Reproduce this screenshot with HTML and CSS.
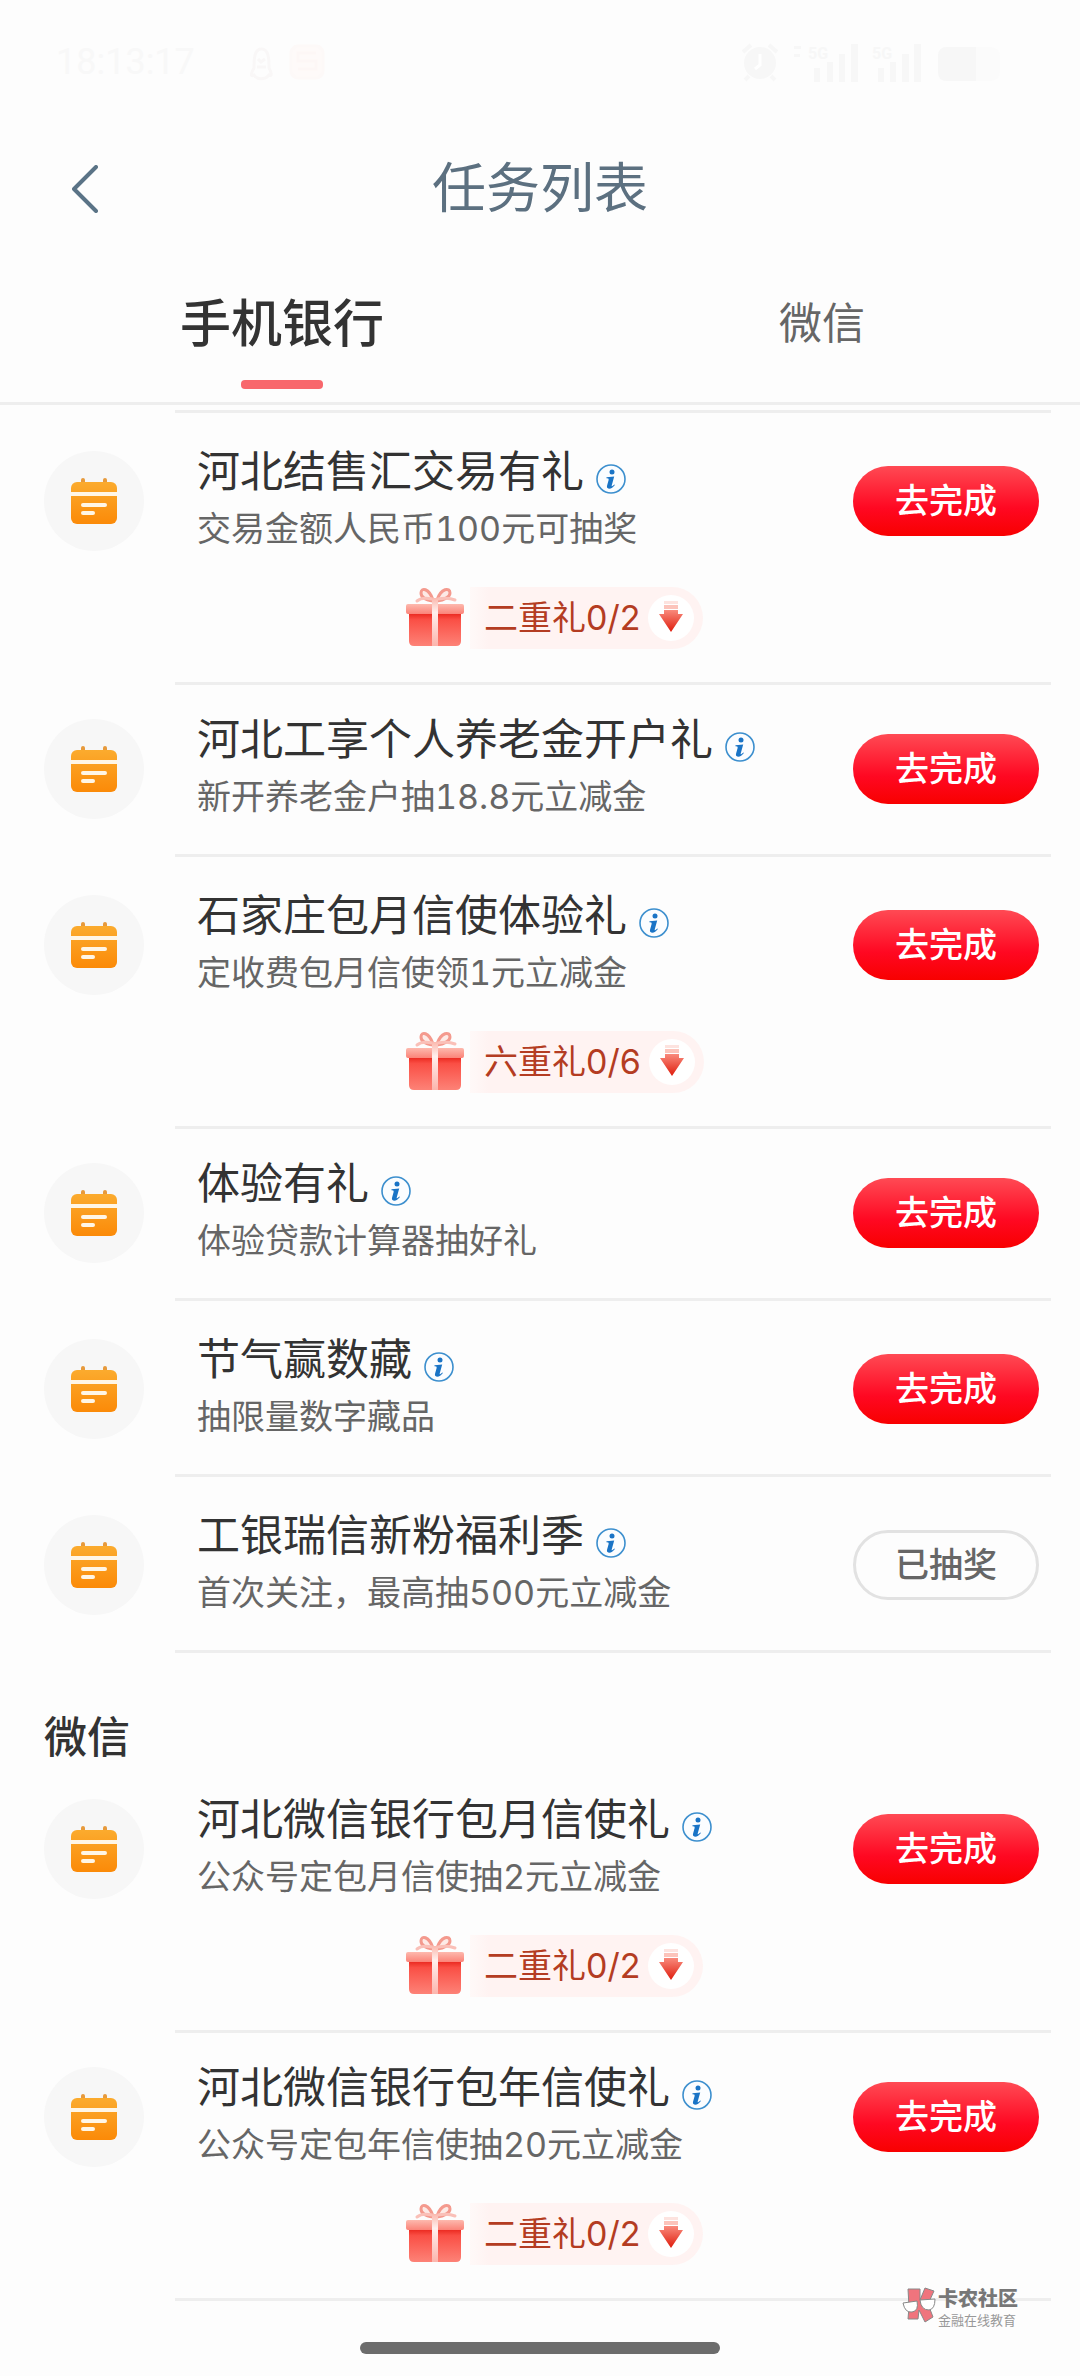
FILE: index.html
```html
<!DOCTYPE html>
<html lang="zh-CN">
<head>
<meta charset="utf-8">
<meta name="viewport" content="width=device-width">
<title>任务列表</title>
<link rel="stylesheet" href="styles.css">
</head>
<body>
<svg class="sprite" aria-hidden="true">
  <defs>
    <linearGradient id="orange" x1="0" y1="0" x2="0" y2="1"><stop offset="0" stop-color="#fbab2e"/><stop offset="1" stop-color="#fb8a08"/></linearGradient>
    <linearGradient id="lid" x1="0" y1="0" x2="0" y2="1"><stop offset="0" stop-color="#fdb9ae"/><stop offset="1" stop-color="#fb8378"/></linearGradient>
    <linearGradient id="box" x1="0" y1="0" x2="0" y2="1"><stop offset="0" stop-color="#e9251c"/><stop offset=".2" stop-color="#fa4f45"/><stop offset="1" stop-color="#fd8277"/></linearGradient>
    <linearGradient id="ribbon" x1="0" y1="0" x2="0" y2="1"><stop offset="0" stop-color="#fbb9ae"/><stop offset=".3" stop-color="#fff0ee"/><stop offset="1" stop-color="#fcb5ad"/></linearGradient>
    <linearGradient id="tip" x1="0" y1="0" x2="0" y2="1"><stop offset="0" stop-color="#f98a7c"/><stop offset="1" stop-color="#df1c0c"/></linearGradient>
    <symbol id="calendar" viewBox="0 0 46 48">
      <rect x="10" y="1" width="4" height="10" rx="2" fill="#e79a3c"/><rect x="32" y="1" width="4" height="10" rx="2" fill="#e79a3c"/>
      <rect x="0" y="5" width="46" height="42" rx="6" fill="url(#orange)"/>
      <rect x="0" y="15" width="46" height="4" fill="#fff6e6"/>
      <rect x="10" y="26" width="26" height="4" rx="2" fill="#fff6e6"/><rect x="10" y="34" width="14" height="4" rx="2" fill="#fff6e6"/>
    </symbol>
    <symbol id="info" viewBox="0 0 30 30">
      <circle cx="15" cy="15" r="14" fill="#fbfdff" stroke="#3c8fce" stroke-width="1.6"/>
      <circle cx="16" cy="8" r="2.5" fill="#1a74c6"/>
      <path d="M10.500 13.200 18.200 12.400 15.700 21.400Q15.500 22.700 16.500 22.100L18.400 20.400 18.900 21.100Q16.200 24.800 13 24.700 10.300 24.300 11.100 21.500L12.700 15.700Q13 14.200 10.400 14.300Z" fill="#1a74c6"/>
    </symbol>
    <symbol id="gift" viewBox="0 0 60 62">
      <path d="M28 13C24 1 16 0 16 6c0 4 5 7 12 8Zm4 0C36 1 45 0 45 6c0 4-6 7-13 8Z" fill="#fdeae6" stroke="#f49a8e" stroke-width="3"/>
      <path d="M27 12Q17 10 12 14M33 12q10-2 17 1" fill="none" stroke="#fac0b8" stroke-width="3" stroke-linecap="round"/>
      <path d="M4 26h52v28q0 5-5 5H9q-5 0-5-5Z" fill="url(#box)"/>
      <rect x="1" y="17" width="58" height="10" rx="2" fill="url(#lid)"/>
      <path d="M27 11h6v48h-6Z" fill="url(#ribbon)"/>
    </symbol>
    <symbol id="down" viewBox="0 0 46 46">
      <circle cx="23" cy="23" r="23" fill="#fff"/>
      <rect x="16" y="6" width="14" height="3" fill="#fde3df"/><rect x="16" y="10" width="14" height="4" fill="#fcc4bb"/>
      <path d="M16 15h14v4h5L23 37 11 19h5Z" fill="url(#tip)"/>
    </symbol>
  </defs>
</svg>

<div class="status">
  <span class="status-time">18:13:17</span>
  <svg class="status-apps" width="80" height="44" viewBox="0 0 80 44" fill="none" stroke="#f9f7f7" stroke-width="3" aria-hidden="true">
    <path d="M7 28c-4 7-3 9 0 7 3 5 11 5 15 0 3 2 3-2 0-7 0-8 0-19-7.500-19S7 20 7 28Zm4-9 3 3 4-3M10 27h9"/>
    <rect x="44" y="6" width="32" height="32" rx="7" fill="#fefaf9" stroke="#fdf9f8"/><path stroke="#fdf7f6" d="M69 13H51v8h18v8H51"/>
  </svg>
  <svg class="status-system" width="264" height="44" viewBox="0 0 264 44" fill="#f7f7f7" aria-hidden="true">
    <circle cx="20" cy="23" r="16"/><path d="M3 12 11 5M37 12l-8-7M9 36l-4 4M31 36l4 4" stroke="#f7f7f7" stroke-width="4"/><path d="M20 14v11l-5 4" stroke="#fff" stroke-width="3" fill="none"/>
    <path d="M54 6h7v3h-7Zm0 8h6v3h-6ZM74 28h6v14h-6Zm13-6h6v20h-6Zm12-8h6v28h-6Zm12-10h7v38h-7ZM138 28h6v14h-6Zm12-6h6v20h-6Zm12-8h7v28h-7Zm12-10h7v38h-7Z"/>
    <text x="68" y="19" class="status-net">5G</text><text x="132" y="19" class="status-net">5G</text>
    <rect x="198" y="7" width="62" height="34" rx="9" fill="#fbfbfb"/><path d="M207 7h29v34h-29q-9 0-9-9V16q0-9 9-9Z"/>
  </svg>
</div>

<header class="nav">
  <button class="back" type="button" aria-label="返回">
    <svg width="26" height="48" viewBox="0 0 26 48" fill="none" stroke="#5a7386" stroke-width="4" stroke-linecap="round" stroke-linejoin="round"><path d="M24 2 2 24l22 22"/></svg>
  </button>
  <h1 class="title">任务列表</h1>
</header>

<nav class="tabs">
  <button class="tab tab--active" type="button">手机银行</button>
  <button class="tab" type="button">微信</button>
</nav>

<main class="list">
  <hr class="rule">

  <article class="task task--gift">
    <span class="badge"><svg class="calendar"><use href="#calendar"/></svg></span>
    <div class="body">
      <div class="row">
        <div class="text"><h3 class="name">河北结售汇交易有礼<svg class="info"><use href="#info"/></svg></h3><p class="desc">交易金额人民币100元可抽奖</p></div>
        <button class="action" type="button">去完成</button>
      </div>
      <div class="gift"><svg class="gift-icon"><use href="#gift"/></svg><button class="chip" type="button">二重礼0/2<svg class="down"><use href="#down"/></svg></button></div>
    </div>
  </article>

  <article class="task">
    <span class="badge"><svg class="calendar"><use href="#calendar"/></svg></span>
    <div class="body">
      <div class="row">
        <div class="text"><h3 class="name">河北工享个人养老金开户礼<svg class="info"><use href="#info"/></svg></h3><p class="desc">新开养老金户抽18.8元立减金</p></div>
        <button class="action" type="button">去完成</button>
      </div>
    </div>
  </article>

  <article class="task task--gift">
    <span class="badge"><svg class="calendar"><use href="#calendar"/></svg></span>
    <div class="body">
      <div class="row">
        <div class="text"><h3 class="name">石家庄包月信使体验礼<svg class="info"><use href="#info"/></svg></h3><p class="desc">定收费包月信使领1元立减金</p></div>
        <button class="action" type="button">去完成</button>
      </div>
      <div class="gift"><svg class="gift-icon"><use href="#gift"/></svg><button class="chip" type="button">六重礼0/6<svg class="down"><use href="#down"/></svg></button></div>
    </div>
  </article>

  <article class="task">
    <span class="badge"><svg class="calendar"><use href="#calendar"/></svg></span>
    <div class="body">
      <div class="row">
        <div class="text"><h3 class="name">体验有礼<svg class="info"><use href="#info"/></svg></h3><p class="desc">体验贷款计算器抽好礼</p></div>
        <button class="action" type="button">去完成</button>
      </div>
    </div>
  </article>

  <article class="task">
    <span class="badge"><svg class="calendar"><use href="#calendar"/></svg></span>
    <div class="body">
      <div class="row">
        <div class="text"><h3 class="name">节气赢数藏<svg class="info"><use href="#info"/></svg></h3><p class="desc">抽限量数字藏品</p></div>
        <button class="action" type="button">去完成</button>
      </div>
    </div>
  </article>

  <article class="task">
    <span class="badge"><svg class="calendar"><use href="#calendar"/></svg></span>
    <div class="body">
      <div class="row">
        <div class="text"><h3 class="name">工银瑞信新粉福利季<svg class="info"><use href="#info"/></svg></h3><p class="desc">首次关注，最高抽500元立减金</p></div>
        <button class="action action--done" type="button">已抽奖</button>
      </div>
    </div>
  </article>

  <h2 class="section">微信</h2>

  <article class="task task--gift">
    <span class="badge"><svg class="calendar"><use href="#calendar"/></svg></span>
    <div class="body">
      <div class="row">
        <div class="text"><h3 class="name">河北微信银行包月信使礼<svg class="info"><use href="#info"/></svg></h3><p class="desc">公众号定包月信使抽2元立减金</p></div>
        <button class="action" type="button">去完成</button>
      </div>
      <div class="gift"><svg class="gift-icon"><use href="#gift"/></svg><button class="chip" type="button">二重礼0/2<svg class="down"><use href="#down"/></svg></button></div>
    </div>
  </article>

  <article class="task task--gift">
    <span class="badge"><svg class="calendar"><use href="#calendar"/></svg></span>
    <div class="body">
      <div class="row">
        <div class="text"><h3 class="name">河北微信银行包年信使礼<svg class="info"><use href="#info"/></svg></h3><p class="desc">公众号定包年信使抽20元立减金</p></div>
        <button class="action" type="button">去完成</button>
      </div>
      <div class="gift"><svg class="gift-icon"><use href="#gift"/></svg><button class="chip" type="button">二重礼0/2<svg class="down"><use href="#down"/></svg></button></div>
    </div>
  </article>
</main>

<footer class="bottom">
  <div class="watermark">
    <svg width="34" height="36" viewBox="0 0 34 36" stroke="#888" aria-hidden="true">
      <path d="M6 2h12v11l5-12 9 3-6 13 5 13-8 5-6-12-1 9H6l1-12Z" fill="#f0747d"/>
      <path d="M1 16 15 14q2 10-5 11-7 1-9-9Zm17-3 15-1q0 10-6 11-8 0-9-10Z" fill="#fff"/>
    </svg>
    <div><p class="brand">卡农社区</p><p class="slogan">金融在线教育</p></div>
  </div>
  <div class="home"></div>
</footer>
</body>
</html>
```
FILE: styles.css
```css
* { box-sizing: border-box; }

body {
  margin: 0;
  background: #fdfdfd;
  color: #333;
  font-family: Inter, "Noto Sans CJK SC", sans-serif;
}

h1, h2, h3, p { margin: 0; font-weight: 400; }
svg { display: block; flex: none; }
button { border: 0; padding: 0; background: none; font: inherit; color: inherit; }

.sprite { position: absolute; width: 0; height: 0; }

/* Status bar */
.status {
  display: flex;
  align-items: center;
  height: 96px;
  padding: 32px 76px 4px 56px;
}
.status-time { font: 36px/44px Roboto, sans-serif; color: #f8f8f8; }
.status-apps { margin-left: 52px; }
.status-system { margin-left: auto; }
.status-net { font: 700 16px Roboto, sans-serif; }

/* Title bar */
.nav {
  display: grid;
  grid-template-columns: 1fr auto 1fr;
  align-items: center;
  height: 184px;
  padding: 2px 72px 0;
}
.back { justify-self: start; }
.title { font-size: 54px; line-height: 80px; color: #5c7080; }

/* Tabs */
.tabs { display: flex; border-bottom: 3px solid #eee; }
.tab {
  display: flex;
  flex: 1;
  flex-direction: column;
  align-items: center;
  height: 122px;
  padding-left: 24px;
  font-size: 43px;
  line-height: 87px;
  color: #666;
}
.tab--active { font-size: 51px; font-weight: 500; color: #333; }
.tab--active::after {
  content: "";
  width: 82px;
  height: 9px;
  margin-top: 13px;
  border-radius: 4px;
  background: #f8676c;
}

/* Task list */
.list { padding: 5px 29px 0 44px; }
.rule { height: 3px; margin: 0 0 4px 131px; border: 0; background: #eee; }
.task { display: flex; gap: 31px; margin-bottom: 4px; }
.task--gift { margin-bottom: 0; }
.badge {
  display: grid;
  place-items: center;
  width: 100px;
  height: 100px;
  margin-top: 34px;
  border-radius: 50%;
  background: #f7f7f7;
}
.calendar { width: 46px; height: 48px; }
.body {
  flex: 1;
  padding: 24px 12px 29px 22px;
  border-bottom: 3px solid #eee;
}
.task--gift .body { padding-bottom: 33px; }
.row { display: flex; align-items: center; justify-content: space-between; }
.name { display: flex; align-items: center; gap: 12px; font-size: 43px; line-height: 60px; }
.info { width: 30px; height: 30px; margin-top: 16px; }
.desc { font-size: 34px; line-height: 56px; font-variant-numeric: tabular-nums; color: #666; }
.action {
  width: 186px;
  height: 70px;
  margin-top: 4px;
  border-radius: 35px;
  background: linear-gradient(#ff4a54, #ff0822 60%, #f80000);
  font-size: 34px;
  font-weight: 500;
  line-height: 70px;
  color: #fff;
}
.action--done { border: 3px solid #e2e2e2; background: none; line-height: 64px; color: #666; }

.gift { display: flex; align-items: center; gap: 5px; margin-top: 30px; padding-left: 208px; }
.gift-icon { width: 60px; height: 62px; }
.chip {
  display: flex;
  align-items: center;
  gap: 8px;
  height: 62px;
  padding: 0 9px 0 14px;
  border-radius: 0 31px 31px 0;
  background: linear-gradient(90deg, #fff9f8, #fff3f2 8%);
  font-size: 34px;
  line-height: 62px;
  color: #b43c22;
}
.down { width: 46px; height: 46px; }

.section { padding-top: 52px; font-size: 43px; font-weight: 500; line-height: 56px; }

/* Bottom edge */
.bottom { position: relative; padding: 41px 0 22px; }
.watermark {
  position: absolute;
  top: -14px;
  right: 62px;
  display: flex;
  gap: 2px;
  color: #777;
}
.brand { font-size: 20px; font-weight: 900; line-height: 24px; }
.slogan { font-size: 13px; line-height: 18px; color: #999; }
.home { width: 33.3333%; height: 12px; margin: 0 auto; border-radius: 6px; background: #6c6c6c; }
```
